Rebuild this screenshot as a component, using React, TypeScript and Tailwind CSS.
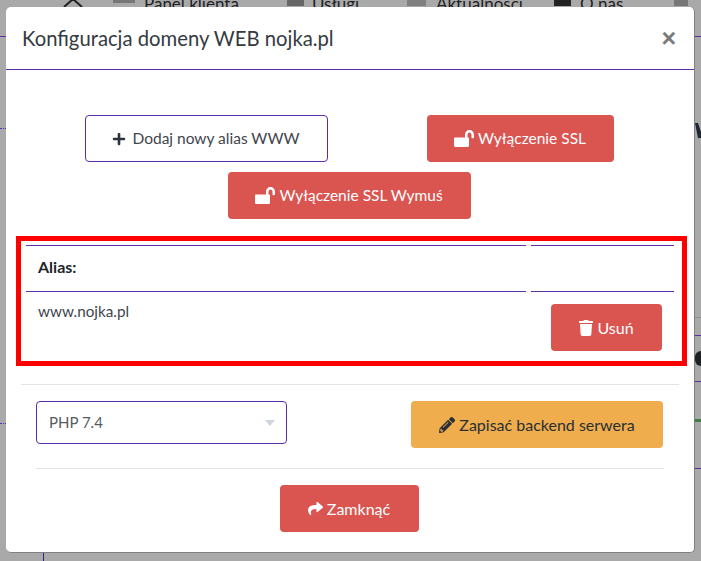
import { FaPlus, FaTrash, FaPencilAlt, FaShare } from 'react-icons/fa'

function UnlockIcon() {
  return (
    <svg viewBox="0 0 20 17" className="h-[17px] w-[20px] shrink-0" fill="currentColor">
      <path d="M1 7.500h10V4.800C11 2.100 13.100 0 15.500 0S20 2.100 20 4.800V7.500C20 8 19.600 8.300 19.200 8.300H18.200C17.800 8.300 17.500 8 17.500 7.500V4.800C17.500 3.500 16.600 2.500 15.500 2.500S13.500 3.500 13.500 4.800V7.500H14C14.600 7.500 15 8 15 8.600V15.800C15 16.500 14.600 17 14 17H1.100C.5 17 0 16.500 0 15.800V8.600C0 8 .5 7.500 1 7.500Z" />
    </svg>
  )
}

function Background() {
  return (
    <div className="absolute inset-0 overflow-hidden">
      <div className="absolute left-[144px] top-[-9px] text-[17px] text-[#1d2124]">Panel klienta</div>
      <div className="absolute left-[312px] top-[-9px] text-[17px] text-[#1d2124]">Usługi</div>
      <div className="absolute left-[436px] top-[-9px] text-[17px] text-[#1d2124]">Aktualności</div>
      <div className="absolute left-[580px] top-[-9px] text-[17px] text-[#1d2124]">O nas</div>
      <div className="absolute left-[113px] top-0 h-[3px] w-[22px] bg-[#777]" />
      <div className="absolute left-[287px] top-0 h-[6px] w-[17px] bg-[#666]" />
      <div className="absolute left-[407px] top-0 h-[6px] w-[19px] bg-[#808080]" />
      <div className="absolute left-[554px] top-0 h-[6px] w-[17px] bg-[#222]" />
      <div className="absolute left-[674px] top-0 h-[6px] w-[14px] bg-[#777]" />
      <svg className="absolute left-[62px] top-0" width="22" height="7" viewBox="0 0 22 7" fill="none" stroke="#222" strokeWidth="2">
        <path d="M2 7 11 -1 20 7" />
      </svg>
      <div className="absolute left-0 top-[36px] h-px w-full bg-[#5a2ea6]" />
      <div className="absolute left-0 top-[128px] w-[6px] border-t border-dotted border-[#5a2ea6]" />
      <div className="absolute left-0 top-[423px] w-[6px] border-t border-dotted border-[#5a2ea6]" />
      <div className="absolute left-[43px] top-[552px] h-[9px] w-px bg-[#3b1d8a]" />
      <svg className="absolute left-[695px] top-[123px]" width="6" height="15" viewBox="0 0 6 15">
        <path d="M0 0H3L6 9V15H3Z" fill="#1c2733" />
      </svg>
      <div className="absolute left-[695px] top-[317px] h-px w-[6px] bg-[#8f8f8f]" />
      <div className="absolute left-[695px] top-[335px] h-px w-[6px] bg-[#5a2ea6]" />
      <div className="absolute left-[695px] top-[351px] h-[15px] w-[6px] rounded-l-full bg-[#1d2124]" />
      <div className="absolute left-[695px] top-[381px] h-px w-[6px] bg-[#5a2ea6]" />
      <div className="absolute left-[695px] top-[419px] h-[3px] w-[6px] bg-[#3f7f46]" />
      <div className="absolute left-[695px] top-[468px] h-px w-[6px] bg-[#5a2ea6]" />
    </div>
  )
}

const redButton = 'flex h-[47px] items-center justify-center gap-[4px] rounded bg-[#da5450] text-white'

export default function App() {
  return (
    <div className="relative h-[561px] w-[701px] overflow-hidden bg-[#a9a9a9] pl-[6px] pt-[7px] font-['Lato',sans-serif] text-[#3e454c]">
      <Background />

      {/* Modal */}
      <div className="relative flex h-[546px] w-[689px] flex-col rounded-[5px] border-b border-r border-[#808080] bg-white">
        <div className="flex h-[63px] shrink-0 items-center justify-between border-b border-[#5a2ea6] pl-[16px] pr-[18px]">
          <h5 className="text-[20.25px] font-normal text-[#343a40]">Konfiguracja domeny WEB nojka.pl</h5>
          <span className="font-['Liberation_Sans',sans-serif] text-[25px] font-bold leading-none text-[#7b7b7b]">×</span>
        </div>

        {/* Actions */}
        <div className="flex flex-col items-center gap-[10px] pr-[2px] pt-[45px]">
          <div className="flex gap-[99px]">
            <button className="flex h-[47px] w-[243px] items-center justify-center gap-[6px] rounded border border-[#5a2ea6] bg-white text-[15.5px]">
              <FaPlus className="h-[14px] w-[14px] text-[#2d333a]" />
              Dodaj nowy alias WWW
            </button>
            <button className={`${redButton} w-[187px] text-[15.5px]`}>
              <UnlockIcon />
              Wyłączenie SSL
            </button>
          </div>
          <button className={`${redButton} w-[243px] text-[15.5px]`}>
            <UnlockIcon />
            Wyłączenie SSL Wymuś
          </button>
        </div>

        {/* Alias table */}
        <div className="ml-[10px] mt-[17px] h-[130px] w-[671px] border-[5px] border-[#ff0000] pl-[5px] pt-[4px]">
          <div className="flex gap-[5px]">
            <div className="flex h-[47px] w-[500px] items-center border-y border-[#5a2ea6] pb-[4px] pl-[12px] text-[16px] font-bold text-[#212529]">
              Alias:
            </div>
            <div className="h-[47px] w-[143px] border-y border-[#5a2ea6]" />
          </div>
          <div className="flex gap-[5px]">
            <div className="w-[500px] pl-[12px] pt-[8px] text-[15.25px]">www.nojka.pl</div>
            <div className="w-[143px] pl-[20px] pt-[12px]">
              <button className={`${redButton} w-[111px] text-[16px]`}>
                <FaTrash className="h-[16px] w-[14px]" />
                Usuń
              </button>
            </div>
          </div>
        </div>

        <div className="ml-[15px] mt-[18px] h-px w-[658px] bg-[#e3e3e3]" />

        {/* Backend */}
        <div className="ml-[30px] mt-[16px] flex items-start">
          <div className="flex h-[43px] w-[251px] items-center justify-between rounded border border-[#5a2ea6] pl-[12px] pr-[11px] text-[15px] text-[#555b61]">
            PHP 7.4
            <span className="h-0 w-0 border-x-[5px] border-t-[6px] border-x-transparent border-t-[#cfd5db]" />
          </div>
          <button className="ml-[124px] flex h-[47px] w-[252px] items-center justify-center gap-[4px] rounded bg-[#efad4e] text-[16px] text-[#2a2f33]">
            <FaPencilAlt className="h-[16px] w-[16px]" />
            Zapisać backend serwera
          </button>
        </div>

        <div className="ml-[30px] mt-[20px] h-px w-[628px] bg-[#e3e3e3]" />

        <div className="mt-[16px] flex justify-center pr-[2px]">
          <button className={`${redButton} w-[139px] text-[16px]`}>
            <FaShare className="h-[15px] w-[15px]" />
            Zamknąć
          </button>
        </div>
      </div>
    </div>
  )
}
